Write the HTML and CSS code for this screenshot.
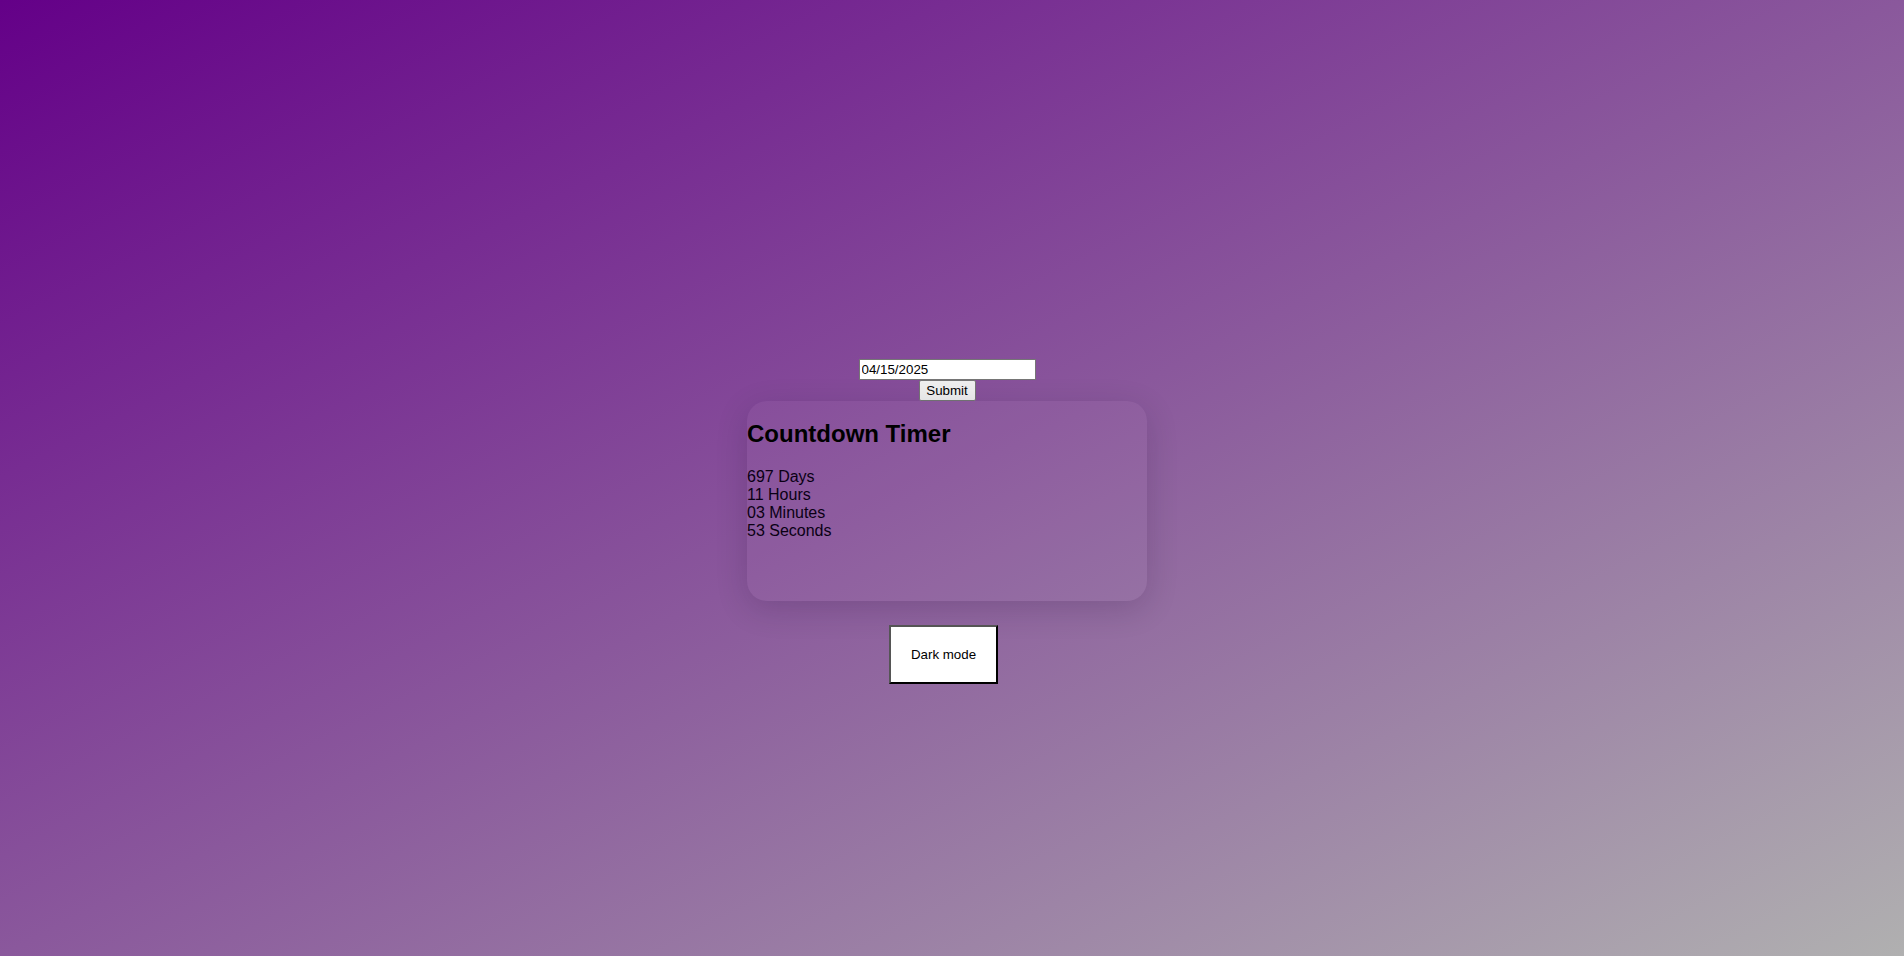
FILE: index.html
```html
<!DOCTYPE html>
<html lang="en">
<head>
<meta charset="utf-8">
<title>Countdown Timer</title>
<link rel="stylesheet" href="styles.css">
</head>
<body>
<main class="page">
  <form class="date-form" onsubmit="return false;">
    <input class="date-input" type="text" value="04/15/2025">
    <button class="submit-btn" type="submit">Submit</button>
  </form>
  <section class="card">
    <h2 class="card-title">Countdown Timer</h2>
    <div class="line">697 Days</div>
    <div class="line">11 Hours</div>
    <div class="line">03 Minutes</div>
    <div class="line">53 Seconds</div>
  </section>
  <button class="mode-btn" type="button">Dark mode</button>
</main>
</body>
</html>
```

FILE: styles.css
```css
html, body {
  margin: 0;
  height: 100%;
}

body {
  background: linear-gradient(to bottom right, #640088, #b0b0b0);
  font-family: "Liberation Sans", Arial, sans-serif;
  color: #000;
  overflow: hidden;
}

.page {
  display: flex;
  flex-direction: column;
  align-items: center;
  padding-top: 359px;
  padding-right: 10px;
  box-sizing: border-box;
  min-height: 100%;
}

.date-form {
  display: flex;
  flex-direction: column;
  align-items: center;
  margin: 0;
}

.date-input {
  box-sizing: border-box;
  width: 177px;
  height: 21px;
  border: 1px solid #767676;
  padding: 1px 2px;
  font-family: "Liberation Sans", Arial, sans-serif;
  font-size: 13.33px;
  background: #fff;
  color: #000;
  margin: 0;
}

.submit-btn {
  box-sizing: border-box;
  height: 21px;
  width: 57px;
  margin: 0;
  padding: 1px 6px;
  font-family: "Liberation Sans", Arial, sans-serif;
  font-size: 13.33px;
  background: #efefef;
  border: 1px solid #767676;
  border-radius: 2px;
  color: #000;
}

.card {
  box-sizing: border-box;
  width: 400px;
  height: 200px;
  border-radius: 20px;
  background: rgba(255, 255, 255, 0.035);
  box-shadow: 0 8px 32px rgba(20, 0, 40, 0.16);
  display: flex;
  flex-direction: column;
}

.card-title {
  font-size: 24px;
  font-weight: bold;
  margin: 19px 0 19.5px;
}

.line {
  font-size: 16px;
  line-height: normal;
  color: #0a0014;
}

.mode-btn {
  margin-top: 24px;
  margin-right: 7px;
  padding: 20px;
  background: #fff;
  color: #000;
  font-family: "Liberation Sans", Arial, sans-serif;
  font-size: 13.33px;
  border-width: 2px;
  border-style: solid;
  border-color: #555 #000 #000 #555;
}
```
